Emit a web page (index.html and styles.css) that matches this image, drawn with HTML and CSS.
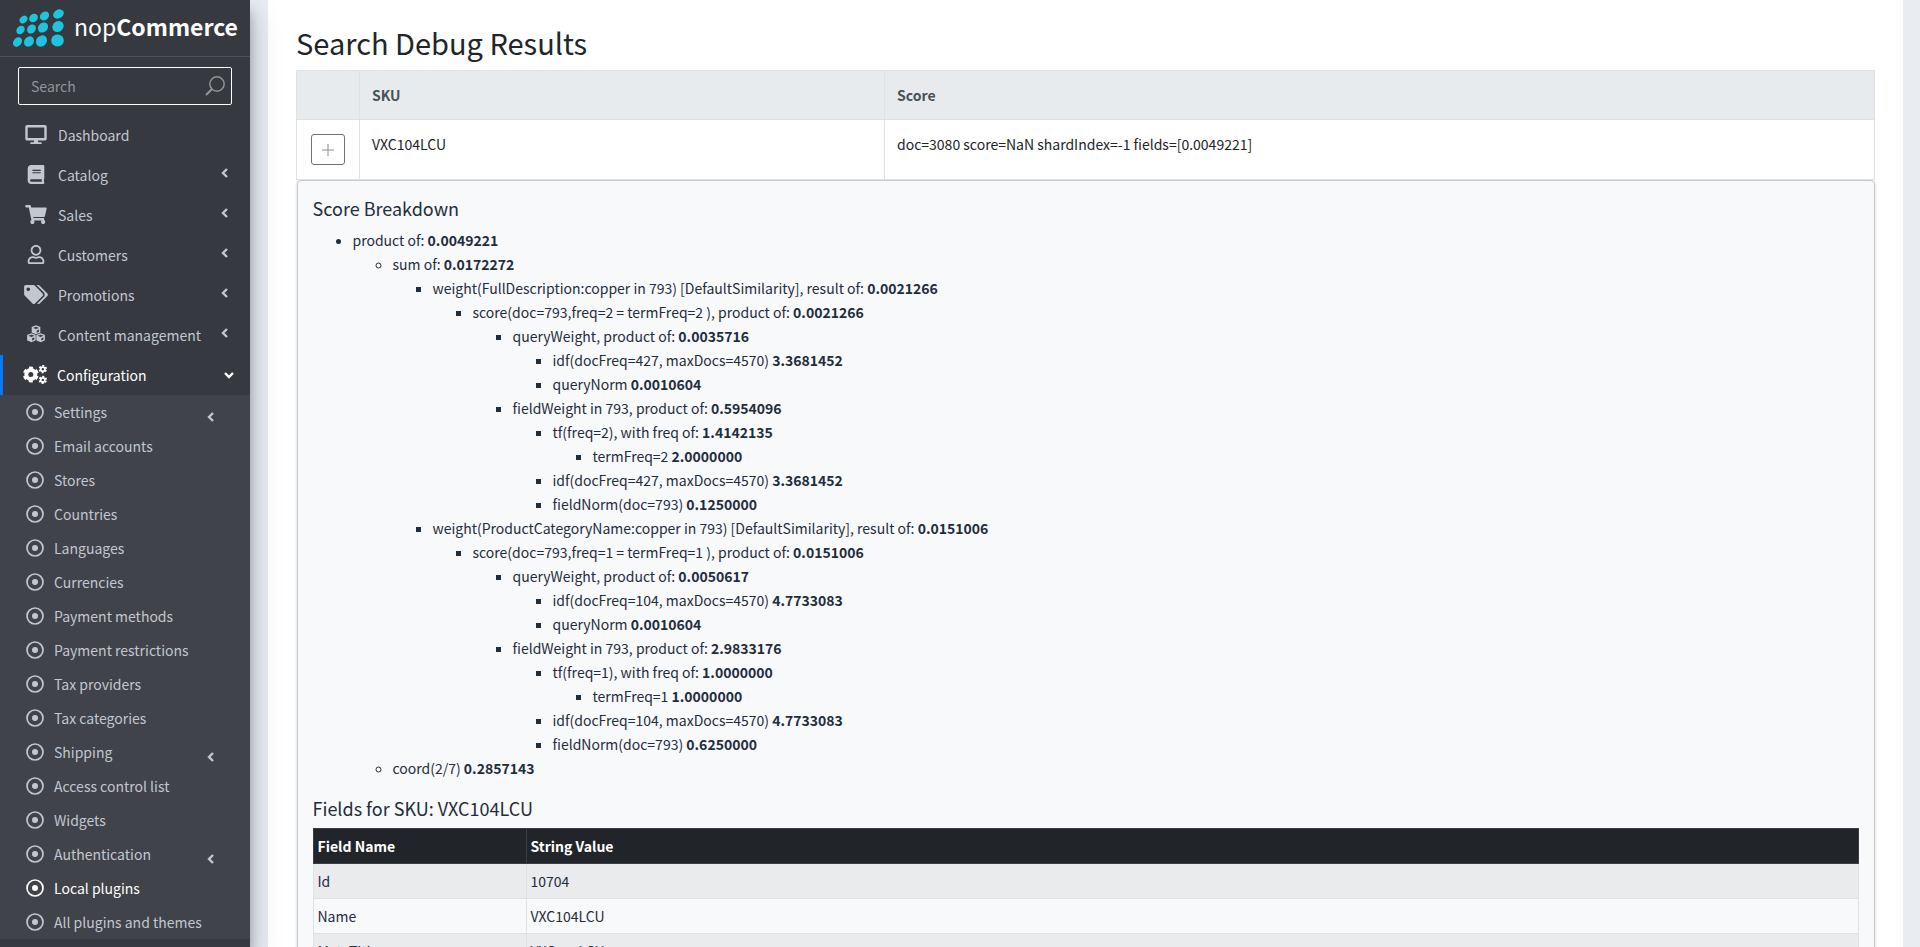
FILE: index.html
```html
<!DOCTYPE html>
<html lang="en">
<head>
<meta charset="utf-8">
<title>Search Debug Results - nopCommerce</title>
<link rel="stylesheet" href="styles.css">
</head>
<body>
<svg class="sprite" aria-hidden="true">
  <symbol id="desktop" viewBox="0 0 576 512"><path d="M528 0H48C21.500 0 0 21.500 0 48v320c0 26.500 21.500 48 48 48h192l-16 48h-72c-13.300 0-24 10.700-24 24s10.700 24 24 24h272c13.300 0 24-10.700 24-24s-10.700-24-24-24h-72l-16-48h192c26.500 0 48-21.500 48-48V48c0-26.500-21.500-48-48-48zm-16 352H64V64h448v288z"/></symbol>
  <symbol id="book" viewBox="0 0 448 512"><path d="M448 360V24c0-13.300-10.700-24-24-24H96C43 0 0 43 0 96v320c0 53 43 96 96 96h328c13.300 0 24-10.700 24-24v-16c0-7.500-3.500-14.300-8.900-18.700-4.200-15.400-4.200-59.300 0-74.700 5.400-4.300 8.900-11.100 8.900-18.600zM128 134c0-3.300 2.700-6 6-6h212c3.300 0 6 2.700 6 6v20c0 3.300-2.700 6-6 6H134c-3.300 0-6-2.700-6-6v-20zm0 64c0-3.300 2.700-6 6-6h212c3.300 0 6 2.700 6 6v20c0 3.300-2.700 6-6 6H134c-3.300 0-6-2.700-6-6v-20zm253.400 250H96c-17.700 0-32-14.300-32-32 0-17.600 14.400-32 32-32h285.400c-1.900 17.100-1.900 46.900 0 64z"/></symbol>
  <symbol id="cart" viewBox="0 0 576 512"><path d="M528.120 301.319l47.273-208C578.806 78.301 567.391 64 551.990 64H159.208l-9.166-44.810C147.758 8.021 137.930 0 126.529 0H24C10.745 0 0 10.745 0 24v16c0 13.255 10.745 24 24 24h69.883l70.248 343.435C147.325 417.100 136 435.222 136 456c0 30.928 25.072 56 56 56s56-25.072 56-56c0-15.674-6.447-29.835-16.824-40h209.647C430.447 426.165 424 440.326 424 456c0 30.928 25.072 56 56 56s56-25.072 56-56c0-22.172-12.888-41.332-31.579-50.405l5.517-24.276c3.413-15.018-8.002-29.319-23.403-29.319H218.117l-6.545-32h293.145c11.206 0 20.920-7.754 23.403-18.681z"/></symbol>
  <symbol id="user" viewBox="0 0 448 512"><path d="M313.600 304c-28.700 0-42.500 16-89.600 16-47.100 0-60.800-16-89.600-16C60.200 304 0 364.200 0 438.400V464c0 26.500 21.500 48 48 48h352c26.500 0 48-21.500 48-48v-25.600c0-74.200-60.200-134.400-134.400-134.400zM400 464H48v-25.600c0-47.600 38.800-86.400 86.400-86.400 14.600 0 38.300 16 89.600 16 51.700 0 74.900-16 89.600-16 47.600 0 86.400 38.800 86.400 86.400V464zM224 288c79.500 0 144-64.500 144-144S303.500 0 224 0 80 64.500 80 144s64.500 144 144 144zm0-240c52.900 0 96 43.100 96 96s-43.100 96-96 96-96-43.100-96-96 43.100-96 96-96z"/></symbol>
  <symbol id="tags" viewBox="0 0 640 512"><path d="M497.941 225.941L286.059 14.059A48 48 0 0 0 252.118 0H48C21.490 0 0 21.490 0 48v204.118a48 48 0 0 0 14.059 33.941l211.882 211.882c18.744 18.745 49.136 18.746 67.882 0l204.118-204.118c18.745-18.745 18.745-49.137 0-67.882zM112 160c-26.510 0-48-21.490-48-48s21.490-48 48-48 48 21.490 48 48-21.490 48-48 48zm513.941 133.823L421.823 497.941c-18.745 18.745-49.137 18.745-67.882 0l-.360-.360L527.640 323.522c16.999-16.999 26.360-39.600 26.360-63.640s-9.362-46.641-26.360-63.640L331.397 0h48.721a48 48 0 0 1 33.941 14.059l211.882 211.882c18.745 18.745 18.745 49.137 0 67.882z"/></symbol>
  <symbol id="cubes" viewBox="0 0 512 512">
    <g id="cube"><path d="M256 8l104 42q12 6 12 20v116q0 14-12 20l-104 46-104-46q-12-6-12-20V70q0-14 12-20z"/><path class="cut" d="M176 78l80 32 80-32-80-30zM276 146v60l58-26v-58z"/></g>
    <use href="#cube" x="-124" y="214"/><use href="#cube" x="124" y="214"/>
  </symbol>
  <symbol id="cogs" viewBox="0 0 640 512">
    <g fill="none" stroke="currentColor">
      <circle cx="208" cy="256" r="122" stroke-width="108"/>
      <circle cx="208" cy="256" r="184" stroke-width="60" stroke-dasharray="104 88.680" stroke-dashoffset="-44"/>
      <g id="gear"><circle cx="530" cy="112" r="56" stroke-width="48"/><circle cx="530" cy="112" r="90" stroke-width="46" stroke-dasharray="52 42.250" stroke-dashoffset="-21"/></g>
      <use href="#gear" y="290"/>
    </g>
  </symbol>
  <symbol id="dot" viewBox="0 0 18 18"><circle cx="9" cy="9" r="8" fill="none" stroke="currentColor" stroke-width="1.700"/><circle cx="9" cy="9" r="3"/></symbol>
  <symbol id="left" viewBox="0 0 10 10"><path d="M7 1L3 5l4 4" fill="none" stroke="currentColor" stroke-width="2.400"/></symbol>
  <symbol id="down" viewBox="0 0 10 10"><path d="M1 3l4 4 4-4" fill="none" stroke="currentColor" stroke-width="2.400"/></symbol>
</svg>

<div class="app">
  <aside class="sidebar">
    <a class="brand" href="#">
      <svg class="brand-mark" viewBox="0 0 52 38" aria-hidden="true">
        <ellipse cx="10.500" cy="10.500" rx="4.300" ry="3.400" transform="rotate(-42 10.500 10.500)"/>
        <ellipse cx="20.500" cy="9" rx="4.700" ry="3.900" transform="rotate(-40 20.500 9)"/>
        <ellipse cx="31.500" cy="7" rx="5" ry="4" transform="rotate(-38 31.500 7)"/>
        <ellipse cx="45.500" cy="5" rx="5.600" ry="4.300" transform="rotate(-28 45.500 5)"/>
        <ellipse cx="7.500" cy="21" rx="4.700" ry="3.700" transform="rotate(-48 7.500 21)"/>
        <ellipse cx="18.500" cy="20" rx="4.900" ry="4" transform="rotate(-48 18.500 20)"/>
        <ellipse cx="30" cy="18.500" rx="5.500" ry="4.600" transform="rotate(-45 30 18.500)"/>
        <ellipse cx="45" cy="17.500" rx="5.900" ry="5.200" transform="rotate(-35 45 17.500)"/>
        <ellipse cx="4.500" cy="33" rx="5.200" ry="4" transform="rotate(-50 4.500 33)"/>
        <ellipse cx="16" cy="32.500" rx="5.500" ry="4.600" transform="rotate(-50 16 32.500)"/>
        <ellipse cx="28.500" cy="32" rx="6" ry="5.200" transform="rotate(-48 28.500 32)"/>
        <ellipse cx="44.500" cy="31.500" rx="6.300" ry="6"/>
      </svg>
      <span class="brand-text">nop<b>Commerce</b></span>
    </a>
    <form class="search">
      <input type="search" placeholder="Search" aria-label="Search">
      <button type="button" aria-label="Search"><svg viewBox="0 0 20 20"><circle cx="12" cy="8" r="7.200"/><path d="M7 13l-6 6" stroke-width="2.200"/></svg></button>
    </form>
    <nav>
      <ul class="menu">
        <li><a href="#"><svg class="icon"><use href="#desktop"/></svg>Dashboard</a></li>
        <li><a href="#"><svg class="icon"><use href="#book"/></svg>Catalog<svg class="caret"><use href="#left"/></svg></a></li>
        <li><a href="#"><svg class="icon"><use href="#cart"/></svg>Sales<svg class="caret"><use href="#left"/></svg></a></li>
        <li><a href="#"><svg class="icon"><use href="#user"/></svg>Customers<svg class="caret"><use href="#left"/></svg></a></li>
        <li><a href="#"><svg class="icon"><use href="#tags"/></svg>Promotions<svg class="caret"><use href="#left"/></svg></a></li>
        <li><a href="#"><svg class="icon"><use href="#cubes"/></svg>Content management<svg class="caret"><use href="#left"/></svg></a></li>
        <li><a class="open" href="#"><svg class="icon"><use href="#cogs"/></svg>Configuration<svg class="caret"><use href="#down"/></svg></a>
          <ul class="submenu">
            <li><a href="#"><svg class="dot"><use href="#dot"/></svg>Settings<svg class="caret"><use href="#left"/></svg></a></li>
            <li><a href="#"><svg class="dot"><use href="#dot"/></svg>Email accounts</a></li>
            <li><a href="#"><svg class="dot"><use href="#dot"/></svg>Stores</a></li>
            <li><a href="#"><svg class="dot"><use href="#dot"/></svg>Countries</a></li>
            <li><a href="#"><svg class="dot"><use href="#dot"/></svg>Languages</a></li>
            <li><a href="#"><svg class="dot"><use href="#dot"/></svg>Currencies</a></li>
            <li><a href="#"><svg class="dot"><use href="#dot"/></svg>Payment methods</a></li>
            <li><a href="#"><svg class="dot"><use href="#dot"/></svg>Payment restrictions</a></li>
            <li><a href="#"><svg class="dot"><use href="#dot"/></svg>Tax providers</a></li>
            <li><a href="#"><svg class="dot"><use href="#dot"/></svg>Tax categories</a></li>
            <li><a href="#"><svg class="dot"><use href="#dot"/></svg>Shipping<svg class="caret"><use href="#left"/></svg></a></li>
            <li><a href="#"><svg class="dot"><use href="#dot"/></svg>Access control list</a></li>
            <li><a href="#"><svg class="dot"><use href="#dot"/></svg>Widgets</a></li>
            <li><a href="#"><svg class="dot"><use href="#dot"/></svg>Authentication<svg class="caret"><use href="#left"/></svg></a></li>
            <li><a class="active" href="#"><svg class="dot"><use href="#dot"/></svg>Local plugins</a></li>
            <li><a href="#"><svg class="dot"><use href="#dot"/></svg>All plugins and themes</a></li>
          </ul>
        </li>
      </ul>
    </nav>
  </aside>

  <main class="content">
    <section class="panel">
      <h1>Search Debug Results</h1>
      <table class="results">
        <colgroup><col class="col-toggle"><col class="col-sku"><col></colgroup>
        <thead><tr><th></th><th>SKU</th><th>Score</th></tr></thead>
        <tbody>
          <tr>
            <td class="toggle"><button type="button" aria-label="Toggle details"><svg viewBox="0 0 12 12"><path d="M6 0v12M0 6h12"/></svg></button></td>
            <td>VXC104LCU</td>
            <td>doc=3080 score=NaN shardIndex=-1 fields=[0.0049221]</td>
          </tr>
          <tr>
            <td class="detail" colspan="3">
              <div class="card">
                <h2>Score Breakdown</h2>
                <ul class="tree">
                  <li>product of: <b>0.0049221</b>
                    <ul>
                      <li>sum of: <b>0.0172272</b>
                        <ul>
                          <li>weight(FullDescription:copper in 793) [DefaultSimilarity], result of: <b>0.0021266</b>
                            <ul>
                              <li>score(doc=793,freq=2 = termFreq=2 ), product of: <b>0.0021266</b>
                                <ul>
                                  <li>queryWeight, product of: <b>0.0035716</b>
                                    <ul>
                                      <li>idf(docFreq=427, maxDocs=4570) <b>3.3681452</b></li>
                                      <li>queryNorm <b>0.0010604</b></li>
                                    </ul>
                                  </li>
                                  <li>fieldWeight in 793, product of: <b>0.5954096</b>
                                    <ul>
                                      <li>tf(freq=2), with freq of: <b>1.4142135</b>
                                        <ul><li>termFreq=2 <b>2.0000000</b></li></ul>
                                      </li>
                                      <li>idf(docFreq=427, maxDocs=4570) <b>3.3681452</b></li>
                                      <li>fieldNorm(doc=793) <b>0.1250000</b></li>
                                    </ul>
                                  </li>
                                </ul>
                              </li>
                            </ul>
                          </li>
                          <li>weight(ProductCategoryName:copper in 793) [DefaultSimilarity], result of: <b>0.0151006</b>
                            <ul>
                              <li>score(doc=793,freq=1 = termFreq=1 ), product of: <b>0.0151006</b>
                                <ul>
                                  <li>queryWeight, product of: <b>0.0050617</b>
                                    <ul>
                                      <li>idf(docFreq=104, maxDocs=4570) <b>4.7733083</b></li>
                                      <li>queryNorm <b>0.0010604</b></li>
                                    </ul>
                                  </li>
                                  <li>fieldWeight in 793, product of: <b>2.9833176</b>
                                    <ul>
                                      <li>tf(freq=1), with freq of: <b>1.0000000</b>
                                        <ul><li>termFreq=1 <b>1.0000000</b></li></ul>
                                      </li>
                                      <li>idf(docFreq=104, maxDocs=4570) <b>4.7733083</b></li>
                                      <li>fieldNorm(doc=793) <b>0.6250000</b></li>
                                    </ul>
                                  </li>
                                </ul>
                              </li>
                            </ul>
                          </li>
                        </ul>
                      </li>
                      <li>coord(2/7) <b>0.2857143</b></li>
                    </ul>
                  </li>
                </ul>
                <h2>Fields for SKU: VXC104LCU</h2>
                <table class="fields">
                  <colgroup><col class="col-name"><col></colgroup>
                  <thead><tr><th>Field Name</th><th>String Value</th></tr></thead>
                  <tbody>
                    <tr><td>Id</td><td>10704</td></tr>
                    <tr><td>Name</td><td>VXC104LCU</td></tr>
                    <tr><td>MetaTitle</td><td>VXC104LCU</td></tr>
                  </tbody>
                </table>
              </div>
            </td>
          </tr>
        </tbody>
      </table>
    </section>
  </main>
</div>
</body>
</html>
```
FILE: styles.css
```css
* { box-sizing: border-box; }

body {
  margin: 0;
  background: #e9edf3;
  color: #212529;
  font-family: "Noto Sans CJK SC", "Source Sans Pro", sans-serif;
  font-size: 14px;
  line-height: 24px;
}

ul { margin: 0; }
a { color: inherit; text-decoration: none; }
svg { fill: currentColor; }
.sprite { display: none; }

.app {
  display: flex;
  height: 100vh;
  overflow: hidden;
}

/* Sidebar */
.sidebar {
  flex: 0 0 250px;
  min-width: 0;
  position: relative;
  z-index: 1;
  background: #363940;
  color: #c2c7d0;
  box-shadow: 0 14px 28px rgba(0, 0, 0, .25), 0 10px 10px rgba(0, 0, 0, .22);
}

.brand {
  display: flex;
  align-items: center;
  gap: 9px;
  height: 57px;
  padding-left: 13px;
  border-bottom: 1px solid #4b545c;
}
.brand-mark { flex: none; width: 52px; height: 38px; overflow: visible; color: #1dc4de; }
.brand-text { color: #fff; font-size: 23px; line-height: 24px; padding-bottom: 4px; }

.search {
  display: flex;
  height: 38px;
  margin: 10px 18px;
  border: 1px solid #fff;
  border-radius: 2px;
}
.search input {
  flex: 1;
  min-width: 0;
  padding: 0 12px;
  border: 0;
  background: none;
  color: #fff;
  font: inherit;
}
.search input::placeholder { color: #939598; }
.search button {
  width: 34px;
  padding: 0 6px 0 8px;
  border: 0;
  background: none;
  color: #939393;
}
.search svg { display: block; width: 20px; height: 20px; fill: none; stroke: currentColor; stroke-width: 1.500; }

.menu, .submenu { padding: 0; list-style: none; }
.menu a { display: flex; align-items: center; height: 40px; padding: 0 20px; }
.icon { width: 24px; height: 19px; margin: 0 10px 2px 4px; }
.caret { width: 10px; height: 10px; margin: 0 0 4px auto; }
.cut { fill: #363940; }
.menu .open { padding: 0 16px; border-left: 3px solid #007bff; color: #fff; }
.open .caret { margin-bottom: 0; }
.submenu { background: #404349; }
.submenu a { height: 34px; padding: 0 34px 0 26px; }
.submenu .active { color: #fff; }
.dot { width: 18px; height: 18px; margin: 0 10px 0 0; }
.submenu .caret { margin: 10px 0 0 auto; }

/* Content */
.content { flex: 1; min-width: 0; padding: 0 17px 0 18px; }
.panel { min-height: 100%; padding: 25px 28px; background: #fff; }

h1, h2 { margin: 0; font-weight: 400; }
h1 { padding-bottom: 11px; font-size: 29px; line-height: 34px; }
h2 { font-size: 18px; line-height: 24px; }

table { width: 100%; border-collapse: collapse; table-layout: fixed; }
th { text-align: left; }
button { font: inherit; }

.col-toggle { width: 63px; }
.col-sku { width: 525px; }
.results > thead th {
  padding: 12px;
  height: 49px;
  border: 1px solid #dee2e6;
  background: #e7ebee;
  color: #495057;
}
.results > tbody > tr > td { padding: 12px; border: 1px solid #dee2e6; vertical-align: top; height: 60px; }
.results > tbody > tr > .toggle { padding: 14px; }
.toggle button {
  display: grid;
  place-items: center;
  width: 34px;
  height: 31px;
  border: 1px solid #6c757d;
  border-radius: 3px;
  background: #fff;
}
.toggle svg { width: 12px; height: 12px; stroke: #8a9097; }
.results > tbody > tr > .detail { padding: 0; border: 0; }

.card {
  padding: 15px;
  border: 1px solid #c6cacf;
  border-radius: 4px;
  background: #f8f9fb;
  box-shadow: 0 1px 3px rgba(0, 0, 0, .2);
  color: #1f2d3d;
}
.tree { padding-left: 40px; margin: 8px 0 16px; }
.tree ul { padding-left: 40px; }

.fields { margin-top: 8px; }
.col-name { width: 213px; }
.fields th, .fields td { height: 35px; padding: 4px; border: 1px solid #dee2e6; }
.fields th { background: #212529; border-color: #383f45; color: #fff; }
.fields tbody tr:nth-child(odd) { background: #eaebed; }
```
